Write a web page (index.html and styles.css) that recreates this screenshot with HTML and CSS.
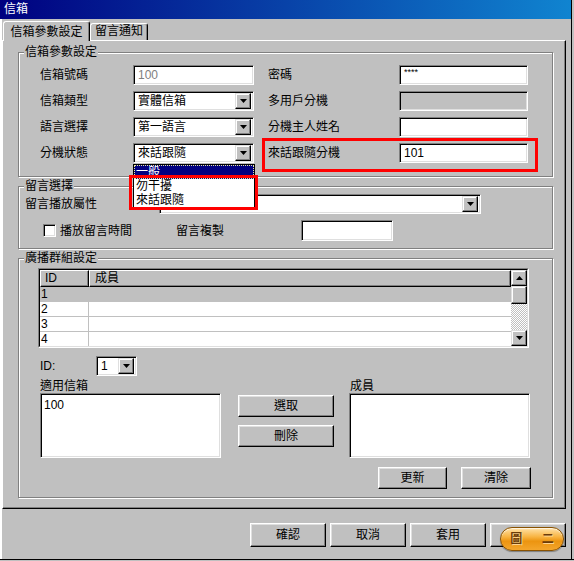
FILE: index.html
```html
<!DOCTYPE html>
<html>
<head>
<meta charset="utf-8">
<title>信箱</title>
<link rel="stylesheet" href="styles.css">
</head>
<body>
<div class="window">
  <div class="titlebar">信箱</div>
  <div class="tabs">
    <div class="tab tab-active">信箱參數設定</div>
    <div class="tab tab-second">留言通知</div>
  </div>
  <div class="panel">
    <div class="group group-mailbox">
      <div class="legend">信箱參數設定</div>
      <div class="form-grid">
        <div class="label">信箱號碼</div>
        <div class="field"><span class="val val-disabled">100</span></div>
        <div class="label label-right">密碼</div>
        <div class="field"><span class="val val-pw">****</span></div>

        <div class="label">信箱類型</div>
        <div class="field select"><span class="val">實體信箱</span><span class="drop-btn"><svg width="7" height="4" viewBox="0 0 7 4"><path d="M0 0h7L3.5 4z"/></svg></span></div>
        <div class="label label-right">多用戶分機</div>
        <div class="field field-disabled"></div>

        <div class="label">語言選擇</div>
        <div class="field select"><span class="val">第一語言</span><span class="drop-btn"><svg width="7" height="4" viewBox="0 0 7 4"><path d="M0 0h7L3.5 4z"/></svg></span></div>
        <div class="label label-right">分機主人姓名</div>
        <div class="field"></div>

        <div class="label">分機狀態</div>
        <div class="field select"><span class="val">來話跟隨</span><span class="drop-btn"><svg width="7" height="4" viewBox="0 0 7 4"><path d="M0 0h7L3.5 4z"/></svg></span></div>
        <div class="label label-right">來話跟隨分機</div>
        <div class="field"><span class="val">101</span></div>
      </div>
    </div>

    <div class="group group-msg">
      <div class="legend">留言選擇</div>
      <div class="msg-row1">
        <div class="label label-play">留言播放屬性</div>
        <div class="field select select-wide"><span class="val"></span><span class="drop-btn"><svg width="7" height="4" viewBox="0 0 7 4"><path d="M0 0h7L3.5 4z"/></svg></span></div>
      </div>
      <div class="msg-row2">
        <span class="checkbox"></span>
        <span class="label label-time">播放留言時間</span>
        <span class="label label-copy">留言複製</span>
        <div class="field field-copy"></div>
      </div>
    </div>

    <div class="group group-broadcast">
      <div class="legend">廣播群組設定</div>
      <div class="table-outer">
        <div class="table-inner">
          <div class="list">
            <div class="list-head">
              <div class="hcell hcell-id">ID</div>
              <div class="hcell hcell-member">成員</div>
            </div>
            <div class="list-row list-row-selected"><div class="cell cell-id">1</div><div class="cell cell-member"></div></div>
            <div class="list-row"><div class="cell cell-id">2</div><div class="cell cell-member"></div></div>
            <div class="list-row"><div class="cell cell-id">3</div><div class="cell cell-member"></div></div>
            <div class="list-row"><div class="cell cell-id">4</div><div class="cell cell-member"></div></div>
          </div>
          <div class="scrollbar">
            <div class="sb-btn"><svg width="7" height="4" viewBox="0 0 7 4"><path d="M3.5 0L7 4H0z"/></svg></div>
            <div class="sb-thumb"></div>
            <div class="sb-track"></div>
            <div class="sb-btn"><svg width="7" height="4" viewBox="0 0 7 4"><path d="M0 0h7L3.5 4z"/></svg></div>
          </div>
        </div>
      </div>

      <div class="id-row">
        <div class="label label-id">ID:</div>
        <div class="field select select-id"><span class="val">1</span><span class="drop-btn"><svg width="7" height="4" viewBox="0 0 7 4"><path d="M0 0h7L3.5 4z"/></svg></span></div>
      </div>

      <div class="cols-row">
        <div class="col col-left">
          <div class="label">適用信箱</div>
          <div class="field textarea"><span class="val">100</span></div>
        </div>
        <div class="col col-mid">
          <div class="btn btn-side">選取</div>
          <div class="btn btn-side">刪除</div>
        </div>
        <div class="col col-right">
          <div class="label">成員</div>
          <div class="field textarea"></div>
        </div>
      </div>

      <div class="action-row">
        <div class="btn btn-update">更新</div>
        <div class="btn btn-clear">清除</div>
      </div>
    </div>
  </div>

  <div class="footer">
    <div class="btn btn-foot">確認</div>
    <div class="btn btn-foot">取消</div>
    <div class="btn btn-foot">套用</div>
    <div class="btn btn-foot"></div>
  </div>

  <div class="popup">
    <div class="popup-item popup-item-active">一般</div>
    <div class="popup-item">勿干擾</div>
    <div class="popup-item">來話跟隨</div>
  </div>
  <div class="mark mark-follow"></div>
  <div class="mark mark-list"></div>
  <div class="pill">圖 二</div>
</div>
</body>
</html>
```

FILE: styles.css
```css
* { box-sizing: border-box; }
html, body { margin: 0; padding: 0; }
body {
  background: #c0c0c0;
  font-family: "Liberation Sans", "Noto Sans CJK TC", "Noto Sans CJK SC", sans-serif;
  font-size: 12px;
  line-height: 14px;
  color: #000;
}
.window {
  position: relative;
  width: 574px;
  height: 561px;
  background: #c0c0c0;
  overflow: hidden;
  box-shadow: inset 0 -1px 0 #c0c0c0, inset 0 -2px 0 #000,
              inset -2px 0 0 #c0c0c0, inset -3px 0 0 #000,
              inset 2px 0 0 #fff, inset 1px 0 0 #dfdfdf;
}
.titlebar {
  width: 571px;
  height: 19px;
  background: linear-gradient(to right, #000080, #1084d0);
  color: #fff;
  padding-left: 4px;
  line-height: 19px;
  font-size: 12px;
}
.tabs {
  position: relative;
  z-index: 1;
  display: flex;
  align-items: flex-end;
  height: 21px;
  padding-left: 3px;
}
.tab {
  height: 17px;
  border: 1px solid;
  border-bottom: none;
  border-color: #fff #000 transparent #fff;
  border-radius: 3px 3px 0 0;
  box-shadow: inset -1px 0 0 #808080;
  background: #c0c0c0;
  text-align: center;
  line-height: 15px;
}
.tab-active {
  width: 87px;
  height: 20px;
  margin-bottom: -1px;
  line-height: 20px;
}
.tab-second {
  width: 58px;
}
.panel {
  margin-left: 2px;
  width: 564px;
  height: 469px;
  border: 1px solid;
  border-color: #fff #000 #000 #fff;
  box-shadow: inset -1px -1px 0 #808080;
  padding: 11px 0 0 15px;
}
.group {
  width: 535px;
  border: 1px solid #808080;
  box-shadow: 1px 1px 0 #fff, inset 1px 1px 0 #fff;
}
.legend {
  display: block;
  width: max-content;
  height: 14px;
  margin: -8px 0 0 5px;
  padding: 0 1px;
  background: #c0c0c0;
  line-height: 14px;
}
.label { line-height: 14px; white-space: nowrap; }

/* sunken field */
.field {
  height: 20px;
  background: #fff;
  border: 1px solid;
  border-color: #808080 #fff #fff #808080;
  box-shadow: inset 1px 1px 0 #000, inset -1px -1px 0 #dfdfdf;
  padding: 1px 1px 1px 4px;
  line-height: 16px;
  display: flex;
  align-items: center;
  overflow: hidden;
}
.field-disabled { background: #c0c0c0; }
.val { white-space: nowrap; }
.val-disabled { color: #808080; }
.val-pw { font-size: 9px; align-self: flex-start; line-height: 11px; letter-spacing: 0; }
.select { padding-right: 2px; padding-top: 2px; padding-bottom: 2px; }
.drop-btn {
  margin-left: auto;
  width: 16px;
  height: 16px;
  flex: none;
  display: flex;
  align-items: center;
  justify-content: center;
  background: #c0c0c0;
  border: 1px solid;
  border-color: #dfdfdf #000 #000 #dfdfdf;
  box-shadow: inset -1px -1px 0 #808080, inset 1px 1px 0 #fff;
}
.drop-btn svg, .sb-btn svg { display: block; fill: #000; }

/* group 1 */
.group-mailbox { padding-bottom: 13px; }
.form-grid {
  margin-top: 6px;
  padding-left: 21px;
  display: grid;
  grid-template-columns: 93px 121px 145px 129px;
  grid-auto-rows: 20px;
  row-gap: 6px;
  align-items: center;
}
.label-right { padding-left: 14px; }

/* group 2 */
.group-msg { margin-top: 9px; padding-bottom: 7px; }
.msg-row1 {
  margin-top: 1px;
  height: 20px;
  display: flex;
  align-items: center;
  padding-left: 6px;
}
.label-play { width: 134px; }
.select-wide { width: 322px; }
.msg-row2 {
  margin-top: 6px;
  height: 21px;
  display: flex;
  align-items: center;
  padding-left: 24px;
}
.checkbox {
  width: 13px;
  height: 13px;
  flex: none;
  background: #fff;
  border: 1px solid;
  border-color: #808080 #fff #fff #808080;
  box-shadow: inset 1px 1px 0 #000, inset -1px -1px 0 #dfdfdf;
}
.label-time { margin-left: 4px; width: 116px; }
.label-copy { width: 125px; }
.field-copy { width: 92px; height: 21px; }

/* group 3 */
.group-broadcast { margin-top: 9px; padding-bottom: 8px; }
.table-outer {
  margin: 3px 0 0 19px;
  width: 491px;
  height: 80px;
  border: 1px solid;
  border-color: #808080 #fff #fff #808080;
}
.table-inner {
  height: 100%;
  border: 1px solid;
  border-color: #000 #dfdfdf #dfdfdf #000;
  background: #fff;
  display: flex;
}
.list { flex: 1; overflow: hidden; }
.list-head { display: flex; height: 17px; }
.hcell {
  height: 17px;
  background: #c0c0c0;
  border: 1px solid;
  border-color: #fff #000 #000 #fff;
  box-shadow: inset -1px -1px 0 #808080;
  line-height: 14px;
}
.hcell-id { width: 49px; padding-left: 4px; }
.hcell-member { flex: 1; padding-left: 5px; }
.list-row {
  display: flex;
  height: 15px;
  border-bottom: 1px solid #c0c0c0;
}
.list-row-selected { background: #c0c0c0; }
.cell { line-height: 14px; }
.cell-id { width: 49px; padding-left: 1px; border-right: 1px solid #c0c0c0; }
.cell-member { flex: 1; }
.scrollbar {
  width: 16px;
  flex: none;
  display: flex;
  flex-direction: column;
}
.sb-btn, .sb-thumb {
  background: #c0c0c0;
  border: 1px solid;
  border-color: #dfdfdf #000 #000 #dfdfdf;
  box-shadow: inset -1px -1px 0 #808080, inset 1px 1px 0 #fff;
}
.sb-btn {
  height: 16px;
  display: flex;
  align-items: center;
  justify-content: center;
}
.sb-thumb { height: 18px; }
.sb-track {
  flex: 1;
  background: repeating-conic-gradient(#fff 0 25%, #c0c0c0 0 50%) 0 0 / 2px 2px;
}
.id-row {
  margin-top: 8px;
  height: 20px;
  display: flex;
  align-items: center;
  padding-left: 21px;
}
.label-id { width: 56px; }
.select-id { width: 41px; }
.cols-row {
  margin-top: 3px;
  display: flex;
  padding-left: 21px;
}
.col-left, .col-right { width: 181px; }
.col-mid {
  width: 96px;
  margin-left: 17px;
  padding-top: 16px;
  display: flex;
  flex-direction: column;
  gap: 8px;
}
.col-right { margin-left: 15px; }
.col-right .label { padding-left: 1px; }
.textarea {
  height: 65px;
  align-items: flex-start;
  padding: 3px 3px;
}
.btn {
  height: 22px;
  background: #c0c0c0;
  border: 1px solid;
  border-color: #fff #000 #000 #fff;
  box-shadow: inset -1px -1px 0 #808080, inset 1px 1px 0 #dfdfdf;
  display: flex;
  align-items: center;
  justify-content: center;
  line-height: 14px;
}
.action-row {
  margin-top: 9px;
  display: flex;
  padding-left: 359px;
}
.btn-update { width: 69px; }
.btn-clear { width: 70px; margin-left: 14px; }

/* footer */
.footer {
  margin-top: 14px;
  padding-left: 250px;
  display: flex;
  gap: 4px;
}
.btn-foot { width: 76px; height: 24px; }

/* overlays */
.popup {
  position: absolute;
  left: 133px;
  top: 164px;
  width: 122px;
  height: 44px;
  background: #fff;
  border: 1px solid #000;
  z-index: 3;
}
.popup-item {
  height: 14px;
  line-height: 14px;
  padding-left: 2px;
  white-space: nowrap;
}
.popup-item-active {
  background: #000080;
  color: #fff;
  outline: 1px dotted #e8e8a0;
  outline-offset: -1px;
}
.mark {
  position: absolute;
  border: 3px solid #ff0000;
  z-index: 4;
}
.mark-follow { left: 262px; top: 138px; width: 276px; height: 34px; }
.mark-list { left: 129px; top: 175px; width: 129px; height: 35px; }
.pill {
  position: absolute;
  left: 500px;
  top: 527px;
  width: 64px;
  height: 24px;
  z-index: 4;
  border-radius: 12px;
  border: 1px solid #8a5200;
  background: linear-gradient(#ffe2a8 0%, #f8b442 40%, #ec9410 60%, #f4a62c 100%);
  box-shadow: inset 0 1px 1px rgba(255,255,255,.7), 0 1px 1px rgba(0,0,0,.35);
  color: #6a3c08;
  font-size: 12px;
  font-weight: bold;
  line-height: 22px;
  text-align: center;
  letter-spacing: 8px;
  padding-left: 8px;
  text-shadow: 1px 1px 0 #ffd590;
}
```
